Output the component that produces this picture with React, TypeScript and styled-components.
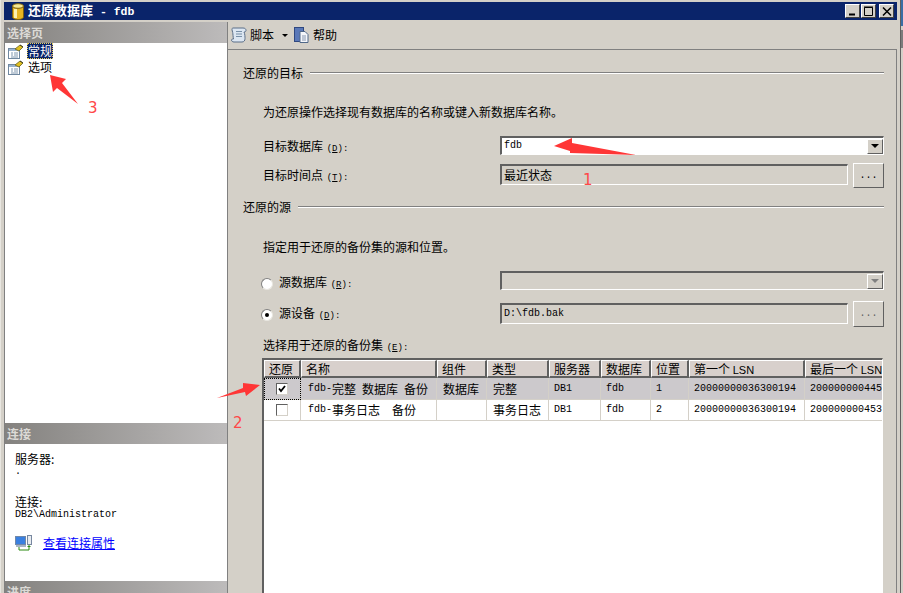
import styled, { createGlobalStyle } from 'styled-components'

const GlobalStyle = createGlobalStyle`
  html, body {
    margin: 0;
    padding: 0;
    background: #d4d0c8;
  }
  * {
    box-sizing: border-box;
  }
`

const cjk = `"Noto Sans CJK SC", "Liberation Sans", sans-serif`
const mono = `"Liberation Mono", "Noto Sans CJK SC", monospace`

const Page = styled.div`
  position: relative;
  width: 903px;
  height: 593px;
  overflow: hidden;
  background: #d4d0c8;
  display: flex;
  font-family: ${cjk};
  font-size: 12px;
  line-height: 16px;
  color: #000;
`

const Win = styled.div`
  width: 897px;
  height: 593px;
  padding: 2px 0 0 4px;
  border-left: 1px solid #e8e6e0;
  display: flex;
  flex-direction: column;
`

const EdgeStrip = styled.div`
  flex: 1;
  margin-left: 3px;
  border-left: 1px solid #606060;
  display: flex;
  flex-direction: column;
`

const EdgeBit = styled.div<{ $h: number; $bg: string }>`
  height: ${(p) => p.$h}px;
  background: ${(p) => p.$bg};
`

const TitleBar = styled.div`
  height: 18px;
  flex: none;
  margin-left: -1px;
  background: #0a246a;
  color: #fff;
  display: flex;
  align-items: center;
  padding: 0 3px 0 7px;
  font-weight: bold;
  font-size: 13px;
`

const TitleText = styled.span`
  margin-left: 3px;
  flex: 1;
  white-space: pre;
`

const TitleLat = styled.span`
  font-family: ${mono};
  font-size: 11.500px;
`

const WinBtn = styled.div<{ $gap?: number }>`
  width: 15px;
  height: 14px;
  margin-left: ${(p) => p.$gap ?? 1}px;
  background: #d4d0c8;
  border-top: 1px solid #fff;
  border-left: 1px solid #fff;
  border-right: 1px solid #404040;
  border-bottom: 1px solid #404040;
  display: flex;
  align-items: center;
  justify-content: center;
`

const Main = styled.div`
  flex: 1;
  min-height: 0;
  margin-top: 2px;
  margin-left: -1px;
  display: flex;
`

const Side = styled.div`
  width: 224px;
  flex: none;
  border-left: 1px solid #808080;
  border-right: 1px solid #808080;
  background: #fff;
  display: flex;
  flex-direction: column;
`

const SideHead = styled.div`
  height: 21px;
  flex: none;
  background: linear-gradient(90deg, #84827f 0%, #bdbbbb 100%);
  color: #dcdad6;
  font-weight: bold;
  display: flex;
  align-items: center;
  padding-left: 2px;
`

const PageList = styled.div`
  height: 380px;
  flex: none;
  padding: 0 0 0 3px;
`

const PageItem = styled.div`
  height: 16px;
  display: flex;
  align-items: center;
`

const PageLabel = styled.span<{ $on?: boolean }>`
  margin-left: 3px;
  padding: 0 1px;
  height: 16px;
  line-height: 15px;
  background: ${(p) => (p.$on ? '#0a246a' : 'transparent')};
  color: ${(p) => (p.$on ? '#fff' : '#000')};
  outline: ${(p) => (p.$on ? '1px dotted #e8d060' : 'none')};
  outline-offset: -1px;
`

const ConnBox = styled.div`
  height: 137px;
  flex: none;
  padding: 8px 0 0 10px;
`

const ConnLabel = styled.div`
  height: 14px;
  line-height: 14px;
`

const ConnValue = styled.div<{ $after?: number }>`
  height: 12px;
  line-height: 12px;
  font-family: ${mono};
  font-size: 10px;
  margin-bottom: ${(p) => p.$after ?? 0}px;
`

const LinkRow = styled.div`
  display: flex;
  align-items: center;
  gap: 10px;
`

const ConnLink = styled.a`
  color: #0000ff;
  text-decoration: underline;
`

const Right = styled.div`
  flex: 1;
  min-width: 0;
  display: flex;
  flex-direction: column;
`

const Toolbar = styled.div`
  height: 28px;
  flex: none;
  border-bottom: 1px solid #808080;
  display: flex;
  align-items: center;
  padding: 0 0 2px 3px;
`

const ToolLabel = styled.span`
  margin-left: 3px;
`

const ToolIcon = styled.svg`
  flex: none;
`

const Caret = styled.span`
  width: 0;
  height: 0;
  margin: 1px 6px 0 8px;
  border-left: 3px solid transparent;
  border-right: 3px solid transparent;
  border-top: 3px solid #000;
`

const Body = styled.div`
  flex: 1;
  min-height: 0;
  border-right: 1px solid #808080;
  padding: 15px 12px 0 15px;
  display: flex;
  flex-direction: column;
`

const Section = styled.div<{ $top?: number }>`
  height: 16px;
  flex: none;
  margin-top: ${(p) => p.$top ?? 0}px;
  display: flex;
  align-items: center;
  gap: 7px;
`

const Rule = styled.div`
  flex: 1;
  height: 2px;
  border-top: 1px solid #808080;
  border-bottom: 1px solid #fff;
`

const Text = styled.div<{ $top: number; $left?: number }>`
  height: 16px;
  flex: none;
  margin-top: ${(p) => p.$top}px;
  margin-left: ${(p) => p.$left ?? 20}px;
`

const Lat = styled.span`
  font-family: ${mono};
  font-size: 10px;
`

const Hotkey = styled.span`
  font-family: ${mono};
  font-size: 9px;
  margin-left: 1px;
  u {
    text-decoration: underline;
  }
`

const Row = styled.div<{ $top: number; $h: number }>`
  height: ${(p) => p.$h}px;
  flex: none;
  margin-top: ${(p) => p.$top}px;
  display: flex;
  align-items: flex-start;
`

const FieldLabel = styled.div<{ $drop?: number }>`
  width: 257px;
  padding: ${(p) => p.$drop ?? 2}px 0 0 20px;
  flex: none;
`

const RadioLabel = styled.div<{ $drop: number }>`
  width: 257px;
  padding: ${(p) => p.$drop}px 0 0 18px;
  flex: none;
  display: flex;
  align-items: center;
  gap: 6px;
`

const Radio = styled.span<{ $on?: boolean }>`
  width: 12px;
  height: 12px;
  border-radius: 50%;
  background: #fff;
  border: 1px solid #808080;
  border-right-color: #e8e6e0;
  border-bottom-color: #e8e6e0;
  display: flex;
  align-items: center;
  justify-content: center;
  &::after {
    content: '';
    width: 4px;
    height: 4px;
    border-radius: 50%;
    background: ${(p) => (p.$on ? '#000' : 'transparent')};
  }
`

const Inset = styled.div<{ $w: number; $h: number; $white?: boolean; $top?: number }>`
  width: ${(p) => p.$w}px;
  height: ${(p) => p.$h}px;
  margin-top: ${(p) => p.$top ?? 0}px;
  flex: none;
  background: ${(p) => (p.$white ? '#fff' : '#d4d0c8')};
  border-top: 2px solid #606060;
  border-left: 2px solid #606060;
  border-right: 1px solid #fff;
  border-bottom: 1px solid #fff;
  display: flex;
  align-items: center;
  padding-left: 2px;
  overflow: hidden;
`

const InsetText = styled.span<{ $lat?: boolean }>`
  flex: 1;
  font-family: ${(p) => (p.$lat ? mono : cjk)};
  font-size: ${(p) => (p.$lat ? 10 : 12)}px;
  line-height: 14px;
`

const DropBtn = styled.div<{ $off?: boolean }>`
  width: 16px;
  height: 15px;
  flex: none;
  background: #d4d0c8;
  border-top: 1px solid #fff;
  border-left: 1px solid #fff;
  border-right: 1px solid #606060;
  border-bottom: 1px solid #606060;
  display: flex;
  align-items: center;
  justify-content: center;
  &::after {
    content: '';
    width: 0;
    height: 0;
    border-left: 4px solid transparent;
    border-right: 4px solid transparent;
    border-top: 4px solid ${(p) => (p.$off ? '#808080' : '#000')};
  }
`

const DotsBtn = styled.div<{ $h: number; $off?: boolean }>`
  width: 31px;
  height: ${(p) => p.$h}px;
  flex: none;
  margin-left: 5px;
  background: #d4d0c8;
  border-top: 1px solid #fff;
  border-left: 1px solid #fff;
  border-right: 1px solid #606060;
  border-bottom: 1px solid #606060;
  font-family: ${mono};
  font-size: 10px;
  color: ${(p) => (p.$off ? '#606060' : '#000')};
  display: flex;
  align-items: center;
  justify-content: center;
`

const Grid = styled.div`
  width: 621px;
  flex: 1;
  min-height: 0;
  margin: 5px 0 0 19px;
  background: #fff;
  border-top: 2px solid #606060;
  border-left: 2px solid #606060;
  border-right: 1px solid #fff;
  overflow: hidden;
`

const GridRow = styled.div<{ $h: number; $bg: string }>`
  display: grid;
  grid-template-columns: 37px 136px 50px 62px 52px 50px 38px 116px 78px;
  height: ${(p) => p.$h}px;
  background: ${(p) => p.$bg};
`

const HeadCell = styled.div`
  background: #d8d0cc;
  border-top: 1px solid #fff;
  border-left: 1px solid #fff;
  border-right: 2px solid #606060;
  border-bottom: 2px solid #606060;
  padding-left: 4px;
  line-height: 15px;
  white-space: nowrap;
  overflow: hidden;
`

const LastHead = styled(HeadCell)`
  border-right: 0;
`

const HeadLat = styled.span`
  font-family: "Liberation Sans", sans-serif;
  font-size: 11px;
`

const Cell = styled.div<{ $lat?: boolean }>`
  border-right: 1px solid #d4d0c8;
  border-bottom: 1px solid #d4d0c8;
  padding-left: ${(p) => (p.$lat ? 5 : 6)}px;
  display: flex;
  align-items: center;
  white-space: pre;
  overflow: hidden;
  font-family: ${(p) => (p.$lat ? mono : cjk)};
  font-size: ${(p) => (p.$lat ? 10 : 12)}px;
`

const NameCell = styled(Cell)`
  padding-left: 7px;
`

const CheckCell = styled.div<{ $focus?: boolean }>`
  border-right: 1px solid #d4d0c8;
  border-bottom: 1px solid #d4d0c8;
  outline: ${(p) => (p.$focus ? '1px dotted #000' : 'none')};
  outline-offset: -1px;
  display: flex;
  align-items: center;
  justify-content: center;
`

const Check = styled.span`
  width: 12px;
  height: 12px;
  background: #fff;
  border: 1px solid #606060;
  border-right-color: #d4d0c8;
  border-bottom-color: #d4d0c8;
  display: flex;
  align-items: center;
  justify-content: center;
`

const Overlay = styled.svg`
  position: absolute;
  left: 0;
  top: 0;
  pointer-events: none;
`

const Mark = styled.span<{ $x: number; $y: number }>`
  position: absolute;
  left: ${(p) => p.$x}px;
  top: ${(p) => p.$y}px;
  color: #ff4848;
  font-family: "DejaVu Sans", sans-serif;
  font-size: 15px;
  line-height: 18px;
`

function DbIcon() {
  return (
    <svg width="14" height="17" viewBox="0 0 14 17">
      <path d="M1.500 3v11c0 1.500 2.200 2.500 5.500 2.500s5.500-1 5.500-2.500V3z" fill="#e6b422" stroke="#7a5e10" />
      <ellipse cx="7" cy="3" rx="5.500" ry="2.300" fill="#f8e890" stroke="#7a5e10" />
      <rect x="3" y="6" width="3" height="9" fill="#fbf0b0" />
    </svg>
  )
}

function PageIcon() {
  return (
    <svg width="16" height="15" viewBox="0 0 16 15">
      <rect x="0.500" y="4.500" width="11" height="10" fill="#fff" stroke="#7088a0" />
      <rect x="1" y="5" width="10" height="2" fill="#9ab4d0" />
      <path d="M3 9h2M3 11h2M6 9h4M6 11h4M3 13h7" stroke="#8098b0" />
      <path d="M7 5l5-4 3 2-4 4z" fill="#e0c020" stroke="#686020" strokeWidth="0.800" />
      <path d="M12 1l3 2" stroke="#404020" />
    </svg>
  )
}

function ScriptIcon() {
  return (
    <ToolIcon width="16" height="16" viewBox="0 0 16 16">
      <path d="M2 1h10c2 0 3 1 3 2.500 0 1-1 1.500-2 1.500 1 2 1 5 1 6.500 0 2-1 3.500-3 3.500H3c-1.500 0-2.500-.8-2.500-2 0-.8 1-1 2-1-.5-2-.5-5-.8-6.500C1.500 4.500 1 3.500 1 2.500 1 1.500 1.400 1 2 1z" fill="#dce6f2" stroke="#5a6e88" />
      <path d="M5 4.500h6M5 7h6M5 9.500h6" stroke="#7890a8" />
    </ToolIcon>
  )
}

function HelpIcon() {
  return (
    <ToolIcon width="16" height="16" viewBox="0 0 16 16">
      <rect x="0.500" y="0.500" width="9" height="14" fill="#5a78b8" stroke="#304880" />
      <path d="M6 4.500h5l3 3v8H6z" fill="#f4f6fa" stroke="#506888" />
      <path d="M8 9h4M8 11h4M8 13h4" stroke="#8898b0" />
    </ToolIcon>
  )
}

function ConnIcon() {
  return (
    <svg width="18" height="16" viewBox="0 0 18 16">
      <rect x="0.500" y="1.500" width="10" height="8" fill="#3a80e0" stroke="#7088a8" />
      <rect x="12.500" y="0.500" width="4" height="9" fill="#e8ecf0" stroke="#7888a0" />
      <rect x="1" y="10" width="10" height="2" fill="#a8b4c4" />
      <path d="M4 12v3h10v-4" fill="none" stroke="#2a8a10" />
      <path d="M12 12l2-2 2 2z" fill="#2a8a10" />
    </svg>
  )
}

function CheckMark() {
  return (
    <svg width="10" height="10" viewBox="0 0 10 10">
      <path d="M2 4.500l2 2.500 4-5" fill="none" stroke="#000" strokeWidth="1.800" />
    </svg>
  )
}

const heads = ['还原', '名称', '组件', '类型', '服务器', '数据库', '位置']

const Selected = '#ccc9cc'

export default function App() {
  return (
    <Page>
      <GlobalStyle />
      <Win>
        <TitleBar>
          <DbIcon />
          <TitleText>
            还原数据库<TitleLat> - fdb</TitleLat>
          </TitleText>
          <WinBtn>
            <svg width="9" height="9" viewBox="0 0 9 9">
              <path d="M1 7.500h6" stroke="#000" strokeWidth="2" />
            </svg>
          </WinBtn>
          <WinBtn>
            <svg width="11" height="10" viewBox="0 0 11 10">
              <path d="M1.500 1.500h8v8h-8zM1 1h9" fill="none" stroke="#000" />
            </svg>
          </WinBtn>
          <WinBtn $gap={3}>
            <svg width="10" height="9" viewBox="0 0 10 9">
              <path d="M1 0.500l8 8M9 0.500l-8 8" stroke="#000" strokeWidth="1.500" />
            </svg>
          </WinBtn>
        </TitleBar>
        <Main>
          <Side>
            <SideHead>选择页</SideHead>
            <PageList>
              <PageItem>
                <PageIcon />
                <PageLabel $on>常规</PageLabel>
              </PageItem>
              <PageItem>
                <PageIcon />
                <PageLabel>选项</PageLabel>
              </PageItem>
            </PageList>
            <SideHead>连接</SideHead>
            <ConnBox>
              <ConnLabel>服务器:</ConnLabel>
              <ConnValue $after={17}>.</ConnValue>
              <ConnLabel>连接:</ConnLabel>
              <ConnValue $after={14}>DB2\Administrator</ConnValue>
              <LinkRow>
                <ConnIcon />
                <ConnLink>查看连接属性</ConnLink>
              </LinkRow>
            </ConnBox>
            <SideHead>进度</SideHead>
          </Side>
          <Right>
            <Toolbar>
              <ScriptIcon />
              <ToolLabel>脚本</ToolLabel>
              <Caret />
              <HelpIcon />
              <ToolLabel>帮助</ToolLabel>
            </Toolbar>
            <Body>
              <Section>
                还原的目标
                <Rule />
              </Section>
              <Text $top={23}>为还原操作选择现有数据库的名称或键入新数据库名称。</Text>
              <Row $top={16} $h={19}>
                <FieldLabel>
                  目标数据库 <Hotkey>(<u>D</u>):</Hotkey>
                </FieldLabel>
                <Inset $w={384} $h={19} $white>
                  <InsetText $lat>fdb</InsetText>
                  <DropBtn />
                </Inset>
              </Row>
              <Row $top={8} $h={25}>
                <FieldLabel $drop={4}>
                  目标时间点 <Hotkey>(<u>T</u>):</Hotkey>
                </FieldLabel>
                <Inset $w={348} $h={21} $top={1}>
                  <InsetText>最近状态</InsetText>
                </Inset>
                <DotsBtn $h={25}>...</DotsBtn>
              </Row>
              <Section $top={11}>
                还原的源
                <Rule />
              </Section>
              <Text $top={24}>指定用于还原的备份集的源和位置。</Text>
              <Row $top={16} $h={18}>
                <RadioLabel $drop={3}>
                  <Radio />
                  <span>源数据库 <Hotkey>(<u>R</u>):</Hotkey></span>
                </RadioLabel>
                <Inset $w={384} $h={19}>
                  <InsetText />
                  <DropBtn $off />
                </Inset>
              </Row>
              <Row $top={12} $h={26}>
                <RadioLabel $drop={4}>
                  <Radio $on />
                  <span>源设备 <Hotkey>(<u>D</u>):</Hotkey></span>
                </RadioLabel>
                <Inset $w={348} $h={21} $top={2}>
                  <InsetText $lat>D:\fdb.bak</InsetText>
                </Inset>
                <DotsBtn $h={26} $off>...</DotsBtn>
              </Row>
              <Text $top={10}>
                选择用于还原的备份集 <Hotkey>(<u>E</u>):</Hotkey>
              </Text>
              <Grid>
                <GridRow $h={18} $bg="#d4d0c8">
                  {heads.map((h) => (
                    <HeadCell key={h}>{h}</HeadCell>
                  ))}
                  <HeadCell>第一个 <HeadLat>LSN</HeadLat></HeadCell>
                  <LastHead>最后一个 <HeadLat>LSN</HeadLat></LastHead>
                </GridRow>
                <GridRow $h={22} $bg={Selected}>
                  <CheckCell $focus>
                    <Check><CheckMark /></Check>
                  </CheckCell>
                  <NameCell><Lat>fdb-</Lat>完整<Lat> </Lat>数据库<Lat> </Lat>备份</NameCell>
                  <Cell>数据库</Cell>
                  <Cell>完整</Cell>
                  <Cell $lat>DB1</Cell>
                  <Cell $lat>fdb</Cell>
                  <Cell $lat>1</Cell>
                  <Cell $lat>20000000036300194</Cell>
                  <Cell $lat>200000000445</Cell>
                </GridRow>
                <GridRow $h={21} $bg="#fff">
                  <CheckCell>
                    <Check />
                  </CheckCell>
                  <NameCell><Lat>fdb-</Lat>事务日志<Lat>  </Lat>备份</NameCell>
                  <Cell />
                  <Cell>事务日志</Cell>
                  <Cell $lat>DB1</Cell>
                  <Cell $lat>fdb</Cell>
                  <Cell $lat>2</Cell>
                  <Cell $lat>20000000036300194</Cell>
                  <Cell $lat>200000000453</Cell>
                </GridRow>
              </Grid>
            </Body>
          </Right>
        </Main>
      </Win>
      <EdgeStrip>
        <EdgeBit $h={26} $bg="#3a6ea5" />
        <EdgeBit $h={4} $bg="#d4d0c8" />
        <EdgeBit $h={18} $bg="#7c7c7c" />
        <EdgeBit $h={545} $bg="#d4d0c8" />
      </EdgeStrip>
      <Overlay width="903" height="593" viewBox="0 0 903 593">
        <polygon points="50,75 66,79 62,83 78,104 57,88 53,92" fill="#ff3636" />
        <polygon points="554,146 572,138 572,143 636,155 570,153 570,151" fill="#ff3636" />
        <polygon points="260,385 246,396 245,392 217,398 243,388 243,383" fill="#ff3636" />
      </Overlay>
      <Mark $x={88} $y={99}>3</Mark>
      <Mark $x={583} $y={171}>1</Mark>
      <Mark $x={233} $y={414}>2</Mark>
    </Page>
  )
}
